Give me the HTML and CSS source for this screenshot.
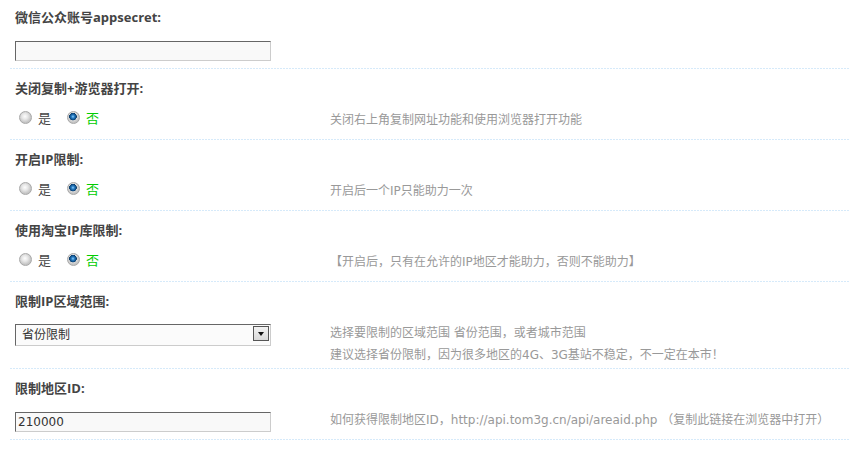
FILE: index.html
```html
<!DOCTYPE html>
<html lang="zh-CN">
<head>
  <meta charset="UTF-8">
  <title>助力设置</title>
  <link rel="stylesheet" href="styles.css">
</head>
<body>
  <div class="form">

    <div class="field field-first">
      <div class="field-title">微信公众账号appsecret:</div>
      <div class="field-row">
        <div class="field-input"><input class="txt" type="text" name="appsecret" value=""></div>
        <div class="field-tip"></div>
      </div>
    </div>

    <div class="field">
      <div class="field-title">关闭复制+游览器打开:</div>
      <div class="field-row">
        <div class="field-input is-radio">
          <label class="radio-item"><input class="radio" type="radio" name="close_copy" value="1"><span>是</span></label>
          <label class="radio-item checked"><input class="radio" type="radio" name="close_copy" value="0" checked><span>否</span></label>
        </div>
        <div class="field-tip">关闭右上角复制网址功能和使用浏览器打开功能</div>
      </div>
    </div>

    <div class="field">
      <div class="field-title">开启IP限制:</div>
      <div class="field-row">
        <div class="field-input is-radio">
          <label class="radio-item"><input class="radio" type="radio" name="ip_limit" value="1"><span>是</span></label>
          <label class="radio-item checked"><input class="radio" type="radio" name="ip_limit" value="0" checked><span>否</span></label>
        </div>
        <div class="field-tip">开启后一个IP只能助力一次</div>
      </div>
    </div>

    <div class="field">
      <div class="field-title">使用淘宝IP库限制:</div>
      <div class="field-row">
        <div class="field-input is-radio">
          <label class="radio-item"><input class="radio" type="radio" name="taobao_ip" value="1"><span>是</span></label>
          <label class="radio-item checked"><input class="radio" type="radio" name="taobao_ip" value="0" checked><span>否</span></label>
        </div>
        <div class="field-tip">【开启后，只有在允许的IP地区才能助力，否则不能助力】</div>
      </div>
    </div>

    <div class="field">
      <div class="field-title">限制IP区域范围:</div>
      <div class="field-row">
        <div class="field-input">
          <div class="select-wrap">
            <select class="sel" name="area_type">
              <option value="1" selected>省份限制</option>
              <option value="2">城市限制</option>
            </select>
            <span class="select-btn"></span>
          </div>
        </div>
        <div class="field-tip">选择要限制的区域范围 省份范围，或者城市范围<br>建议选择省份限制，因为很多地区的4G、3G基站不稳定，不一定在本市！</div>
      </div>
    </div>

    <div class="field">
      <div class="field-title">限制地区ID:</div>
      <div class="field-row">
        <div class="field-input"><input class="txt" type="text" name="area_id" value="210000"></div>
        <div class="field-tip">如何获得限制地区ID，http://api.tom3g.cn/api/areaid.php （复制此链接在浏览器中打开）</div>
      </div>
    </div>

  </div>
</body>
</html>
```

FILE: styles.css
```css
body {
  margin: 0;
  background: #fff;
  font-family: 'Liberation Sans', 'Noto Sans CJK SC', sans-serif;
  color: #444;
}

.form {
  padding-left: 10px;
}

.field-title {
  padding: 10px 5px 7px;
  line-height: 18px;
  font-family: 'Open Sans', 'Noto Sans CJK SC', sans-serif;
  font-size: 13px;
  font-weight: 700;
  color: #444;
}

.field-first .field-title {
  padding-top: 8px;
}

.field-row {
  display: grid;
  grid-template-columns: 315px 1fr;
  min-height: 36px;
  box-sizing: border-box;
  padding-bottom: 1px;
  background: repeating-linear-gradient(to right, #d6eafa 0 2px, transparent 2px 3px) left bottom / 100% 1px no-repeat;
}

.field-input {
  padding: 8px 0 0 5px;
}

.field-input.is-radio {
  display: flex;
  align-items: center;
  height: 18px;
  padding-top: 4px;
}

.field-tip {
  padding: 5px 0 2px 5px;
  line-height: 22px;
  font-family: 'DejaVu Sans', 'Noto Sans CJK SC', sans-serif;
  font-size: 12px;
  color: #999;
}

.txt {
  display: block;
  width: 256px;
  height: 20px;
  margin: 0;
  padding: 0 2px;
  box-sizing: border-box;
  border: 1px solid;
  border-color: #666 #ccc #ccc #666;
  background: #f9f9f9;
  font-family: 'DejaVu Sans', sans-serif;
  font-size: 12px;
  color: #333;
  outline: none;
}

.radio-item {
  display: flex;
  align-items: center;
  margin-right: 12px;
  font-size: 13px;
  color: #444;
}

.radio-item.checked {
  color: #00cc00;
}

.radio {
  appearance: none;
  width: 13px;
  height: 13px;
  margin: 0 6px 0 4px;
  border-radius: 50%;
  border: 1px solid #a8a8a8;
  box-sizing: border-box;
  background: radial-gradient(circle at 45% 40%, #fdfdfd 0, #e6e6e6 3px, #c4c4c4 6px);
}

.radio:checked {
  background:
    radial-gradient(circle at 45% 42%, #8fd0ff 0, #2a7fc4 1.5px, #0e4f8a 3px, #0a3a66 3.6px, transparent 4px),
    radial-gradient(circle at 45% 40%, #fdfdfd 0, #e6e6e6 3px, #c4c4c4 6px);
}

.select-wrap {
  position: relative;
  width: 256px;
}

.sel {
  appearance: none;
  display: block;
  width: 256px;
  height: 22px;
  margin: -1px 0 0;
  padding: 0 0 0 6px;
  border: 1px solid;
  border-color: #666 #ccc #ccc #666;
  border-radius: 0;
  background: #fbfbfb;
  font-family: 'Liberation Sans', 'Noto Sans CJK SC', sans-serif;
  font-size: 12px;
  color: #333;
  outline: none;
}

.select-btn {
  position: absolute;
  top: 2px;
  right: 2px;
  width: 16px;
  height: 15px;
  box-sizing: border-box;
  border: 1px solid #555;
  background: linear-gradient(#f2f2f2, #d8d8d8);
  pointer-events: none;
}

.select-btn::after {
  content: '';
  position: absolute;
  left: 4px;
  top: 5px;
  border-left: 3.5px solid transparent;
  border-right: 3.5px solid transparent;
  border-top: 4px solid #111;
}
```
